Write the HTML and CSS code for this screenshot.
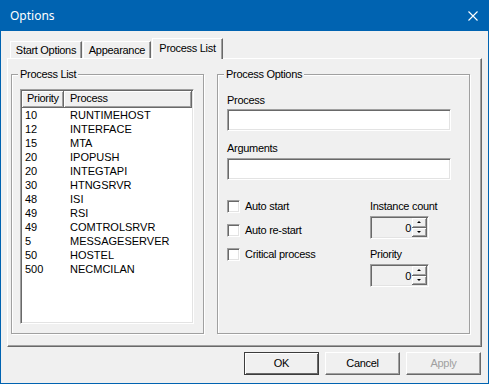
FILE: index.html
```html
<!DOCTYPE html>
<html lang="en">
<head>
  <meta charset="UTF-8" />
  <title>Options</title>
  <link rel="stylesheet" href="styles.css">
</head>
<body>

  <div class="window">
    <!-- barra de titulo -->
    <div class="titlebar">
      <span class="title">Options</span>
      <svg class="close" width="10" height="10" viewBox="0 0 10 10"><path d="M0.5 0.5L9.5 9.5M9.5 0.5L0.5 9.5" stroke="#fff" stroke-width="1.1" fill="none"/></svg>
    </div>

    <div class="content">
      <!-- pestañas -->
      <div class="tabs">
        <div class="tab tab-start">Start Options</div>
        <div class="tab tab-look">Appearance</div>
        <div class="tab active">Process List</div>
      </div>

      <div class="panel">
        <!-- lista de procesos -->
        <div class="group group-list">
          <span class="group-title">Process List</span>
          <div class="listview">
            <div class="lv-head">
              <div class="lv-h lv-prio">Priority</div>
              <div class="lv-h lv-name">Process</div>
            </div>
            <div class="lv-row"><span class="c-prio">10</span><span class="c-name">RUNTIMEHOST</span></div>
            <div class="lv-row"><span class="c-prio">12</span><span class="c-name">INTERFACE</span></div>
            <div class="lv-row"><span class="c-prio">15</span><span class="c-name">MTA</span></div>
            <div class="lv-row"><span class="c-prio">20</span><span class="c-name">IPOPUSH</span></div>
            <div class="lv-row"><span class="c-prio">20</span><span class="c-name">INTEGTAPI</span></div>
            <div class="lv-row"><span class="c-prio">30</span><span class="c-name">HTNGSRVR</span></div>
            <div class="lv-row"><span class="c-prio">48</span><span class="c-name">ISI</span></div>
            <div class="lv-row"><span class="c-prio">49</span><span class="c-name">RSI</span></div>
            <div class="lv-row"><span class="c-prio">49</span><span class="c-name">COMTROLSRVR</span></div>
            <div class="lv-row"><span class="c-prio">5</span><span class="c-name">MESSAGESERVER</span></div>
            <div class="lv-row"><span class="c-prio">50</span><span class="c-name">HOSTEL</span></div>
            <div class="lv-row"><span class="c-prio">500</span><span class="c-name">NECMCILAN</span></div>
          </div>
        </div>

        <!-- opciones -->
        <div class="group group-opts">
          <span class="group-title">Process Options</span>
          <div class="field-label">Process</div>
          <div class="textbox"></div>
          <div class="field-label lbl-args">Arguments</div>
          <div class="textbox tb-args"></div>

          <div class="opts-bottom">
            <div class="checks">
              <div class="check"><span class="box"></span>Auto start</div>
              <div class="check"><span class="box"></span>Auto re-start</div>
              <div class="check"><span class="box"></span>Critical process</div>
            </div>
            <div class="spins">
              <div class="spin-label">Instance count</div>
              <div class="spin">
                <span class="spin-val">0</span>
                <span class="spin-btns">
                  <span class="spin-btn"><span class="arr-up"></span></span>
                  <span class="spin-btn"><span class="arr-down"></span></span>
                </span>
              </div>
              <div class="spin-label lbl-prio">Priority</div>
              <div class="spin">
                <span class="spin-val">0</span>
                <span class="spin-btns">
                  <span class="spin-btn"><span class="arr-up"></span></span>
                  <span class="spin-btn"><span class="arr-down"></span></span>
                </span>
              </div>
            </div>
          </div>
        </div>
      </div>

      <!-- botones -->
      <div class="buttons">
        <div class="btn default">OK</div>
        <div class="btn">Cancel</div>
        <div class="btn disabled">Apply</div>
      </div>
    </div>
  </div>

</body>
</html>
```

FILE: styles.css
```css
*{margin:0;padding:0;box-sizing:border-box}

body{
  background:#fff;
  font-family:'Liberation Sans',Arial,sans-serif;
  font-size:11px;color:#000;letter-spacing:-0.3px
}

.window{
  width:489px;height:384px;
  border:1px solid #0063b1;border-top:none;
  background:#f0f0f0;
  display:flex;flex-direction:column
}

/* === Titulo === */
.titlebar{
  height:31px;background:#0063b1;color:#fff;
  display:flex;align-items:center;justify-content:space-between;
  padding:0 10px 0 9px
}
.title{font-family:'Noto Sans','Open Sans',sans-serif;font-size:12px;letter-spacing:0}
.close{display:block}

.content{padding:7px 6px 0 6px}

/* === Pestañas === */
.tabs{height:20px;display:flex;align-items:flex-end;padding-left:3px;gap:1px}
.tab{
  height:17px;line-height:16px;text-align:center;
  border-top:1px solid #fff;border-left:1px solid #fff;border-right:1px solid #696969;
  box-shadow:inset -1px 0 #a0a0a0
}
.tab-start{width:72px}
.tab-look{width:68px}
.tab.active{
  width:71px;height:21px;line-height:18px;margin-bottom:-1px;
  background:#f0f0f0;position:relative;z-index:2
}

/* === Panel === */
.panel{
  height:289px;display:flex;padding:15px 0 0 3px;
  border-top:1px solid #fff;border-left:1px solid #fff;
  border-right:1px solid #696969;border-bottom:1px solid #696969;
  box-shadow:inset -1px -1px #a0a0a0
}

.group{
  position:relative;height:260px;
  border:1px solid #a0a0a0;
  box-shadow:1px 1px 0 #fff,inset 1px 1px 0 #fff
}
.group-title{
  position:absolute;top:-8px;left:6px;padding:0 2px;
  background:#f0f0f0;line-height:14px
}
.group-list{width:193px;padding:14px 0 0 8px}
.group-opts{width:253px;margin-left:13px;padding:18px 0 0 9px}

/* === Lista === */
.listview{
  width:174px;height:235px;background:#fff;
  border:1px solid;border-color:#a0a0a0 #fff #fff #a0a0a0;
  box-shadow:inset 1px 1px #696969,inset -1px -1px #e3e3e3;
  padding:1px
}
.lv-head{display:flex;height:17px}
.lv-h{
  height:17px;line-height:15px;background:#f0f0f0;
  border-right:1px solid #696969;border-bottom:1px solid #696969;
  box-shadow:inset 1px 1px #fff,inset -1px -1px #a0a0a0
}
.lv-prio{width:42px;padding-left:5px}
.lv-name{flex:1;padding-left:6px}
.lv-row{display:flex;height:14px;line-height:14px}
.c-prio{width:42px;padding-left:3px;letter-spacing:0}
.c-name{padding-left:6px;letter-spacing:0}

/* === Campos === */
.field-label{height:14px;line-height:14px}
.textbox{
  width:224px;height:22px;margin-top:2px;background:#fff;
  border:1px solid;border-color:#a0a0a0 #fff #fff #a0a0a0;
  box-shadow:inset 1px 1px #696969,inset -1px -1px #e3e3e3
}
.lbl-args{margin-top:10px}
.tb-args{margin-top:3px}

.opts-bottom{display:flex;margin-top:18px}
.checks{width:143px;display:flex;flex-direction:column;gap:8px}
.check{display:flex;align-items:center;gap:5px;height:16px;white-space:nowrap}
.box{
  width:13px;height:13px;background:#fff;
  border:1px solid;border-color:#a0a0a0 #fff #fff #a0a0a0;
  box-shadow:inset 1px 1px #696969,inset -1px -1px #e3e3e3
}

.spin-label{height:14px;line-height:14px;margin-top:1px}
.lbl-prio{margin-top:8px}
.spin{
  width:59px;height:23px;margin-top:3px;display:flex;align-items:center;
  border:1px solid;border-color:#a0a0a0 #fff #fff #a0a0a0;
  box-shadow:inset 1px 1px #696969,inset -1px -1px #e3e3e3;
  padding:1px 1px 1px 2px
}
.spin-val{flex:1;text-align:right;padding-right:1px}
.spin-btns{display:flex;flex-direction:column;width:15px;height:19px}
.spin-btn{
  flex:1;display:flex;align-items:center;justify-content:center;
  background:#f0f0f0;
  border-right:1px solid #696969;border-bottom:1px solid #696969;
  box-shadow:inset 1px 1px #fff,inset -1px -1px #a0a0a0
}
.arr-up{width:0;height:0;border-left:2px solid transparent;border-right:2px solid transparent;border-bottom:2px solid #000}
.arr-down{width:0;height:0;border-left:2px solid transparent;border-right:2px solid transparent;border-top:2px solid #000}

/* === Botones === */
.buttons{display:flex;justify-content:flex-end;gap:6px;margin-top:5px;padding-right:1px}
.btn{
  width:75px;height:23px;line-height:21px;text-align:center;background:#f0f0f0;
  border:1px solid;border-color:#fff #696969 #696969 #fff;
  box-shadow:inset -1px -1px #a0a0a0
}
.btn.default{border-color:#3c3c3c;box-shadow:inset 1px 1px #fff,inset -1px -1px #696969}
.btn.disabled{color:#a0a0a0}
```
